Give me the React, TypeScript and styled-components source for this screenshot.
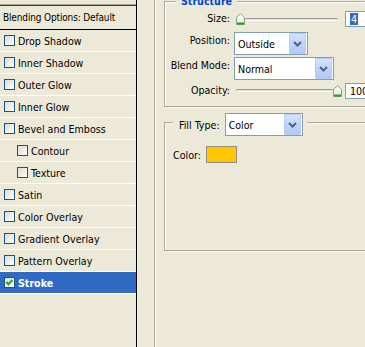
import React from "react";
import styled, { createGlobalStyle } from "styled-components";

const FONT = `"DejaVu Sans Condensed", "DejaVu Sans", sans-serif`;

const Global = createGlobalStyle`
  html, body { margin: 0; padding: 0; background: #ece9d8; overflow: hidden; }
  body { font-family: ${FONT}; font-stretch: condensed; font-size: 10.6px; color: #000; }
  * { box-sizing: border-box; }
`;

const Root = styled.div`
  display: flex;
  width: 365px;
  height: 347px;
  background: #ece9d8;
  overflow: hidden;
`;

const StylesList = styled.div`
  width: 137px;
  flex: none;
  border-right: 1px solid #000;
  display: flex;
  flex-direction: column;
`;

const TopStrip = styled.div`
  height: 5px;
  border-bottom: 1px solid #aca899;
`;

const HeaderItem = styled.div`
  height: 25px;
  border-top: 1px solid #3a3a3a;
  border-bottom: 1px solid #000;
  display: flex;
  align-items: center;
  padding-left: 3px;
  white-space: nowrap;
  font-size: 10px;
  letter-spacing: -0.15px;
`;

const Item = styled.div<{ $indent?: boolean; $selected?: boolean }>`
  height: 22px;
  border-bottom: 1px solid #fff;
  display: flex;
  align-items: center;
  gap: 3px;
  padding-left: ${(p) => (p.$indent ? 17 : 4)}px;
  white-space: nowrap;
  background: ${(p) => (p.$selected ? "#316ac5" : "transparent")};
  color: ${(p) => (p.$selected ? "#fff" : "#000")};
  font-weight: ${(p) => (p.$selected ? 700 : 400)};
`;

const Box = styled.span`
  width: 11px;
  height: 11px;
  flex: none;
  border: 1px solid #1c5180;
  background: linear-gradient(135deg, #dcdcd7 0%, #f0f0ea 60%, #ffffff 100%);
  display: flex;
  align-items: center;
  justify-content: center;
`;

const Gutter = styled.div`
  width: 18px;
  flex: none;
  border-right: 1px solid #aca899;
`;

const Pane = styled.div`
  flex: none;
  width: 260px;
  border-left: 1px solid #fff;
  padding: 1px 0 0 8px;
  display: flex;
  flex-direction: column;
`;

const GroupBox = styled.div<{ $h: number; $mt?: number }>`
  position: relative;
  width: 240px;
  height: ${(p) => p.$h}px;
  margin-top: ${(p) => p.$mt ?? 0}px;
  border: 1px solid #aca899;
  box-shadow: inset 1px 1px 0 #fff, 1px 1px 0 #fff;
  display: flex;
  flex-direction: column;
`;

const Legend = styled.div<{ $left: number; $top: number }>`
  position: absolute;
  left: ${(p) => p.$left}px;
  top: ${(p) => p.$top}px;
  background: #ece9d8;
  display: flex;
  align-items: center;
  gap: 5px;
  padding: 0 4px 0 6px;
  white-space: nowrap;
`;

const LegendTitle = styled.div`
  color: #0046d5;
  font-weight: 700;
  line-height: 12px;
  padding: 0 5px;
  position: absolute;
  left: 11px;
  top: -7px;
  background: #ece9d8;
`;

const Form = styled.div`
  display: flex;
  flex-direction: column;
  padding-top: 8px;
`;

const Row = styled.div<{ $h: number; $mt?: number }>`
  display: flex;
  align-items: flex-start;
  height: ${(p) => p.$h}px;
  margin-top: ${(p) => p.$mt ?? 0}px;
`;

const Label = styled.div`
  width: 65px;
  flex: none;
  text-align: right;
  line-height: 12px;
  padding-top: 2px;
  white-space: nowrap;
`;

const Slider = styled.div`
  position: relative;
  width: 102px;
  height: 100%;
  margin-left: 6px;
  display: flex;
  align-items: center;
  flex: none;
`;

const Track = styled.div`
  width: 100%;
  height: 3px;
  border-top: 1px solid #9d9c99;
  border-bottom: 1px solid #fff;
  border-left: 1px solid #b5b3a8;
  background: #e3e1d4;
  border-radius: 1px;
`;

const Thumb = styled.svg`
  position: absolute;
  top: 3px;
  width: 9px;
  height: 12px;
`;

const TextBox = styled.div`
  width: 34px;
  height: 16px;
  margin-left: 7px;
  align-self: center;
  flex: none;
  border: 1px solid #7f9db9;
  background: #fff;
  padding-left: 4px;
  line-height: 14px;
  white-space: nowrap;
`;

const Highlight = styled.span`
  display: inline-block;
  background: #316ac5;
  color: #fff;
  padding: 0 1px;
  line-height: 12px;
`;

const Select = styled.div<{ $w: number }>`
  width: ${(p) => p.$w}px;
  height: 23px;
  flex: none;
  border: 1px solid #7f9db9;
  background: #fff;
  display: flex;
  align-items: center;
  padding-left: 3px;
  white-space: nowrap;
`;

const SelectWrap = styled.div`
  margin-left: 4px;
`;

const DropButton = styled.div`
  margin-left: auto;
  margin-right: 1px;
  width: 17px;
  height: 21px;
  border: 1px solid #b9cbf3;
  border-radius: 1px;
  background: linear-gradient(180deg, #d6e2fd 0%, #c3d4fb 45%, #b3c7f5 100%);
  display: flex;
  align-items: center;
  justify-content: center;
`;

const ColorRow = styled.div`
  display: flex;
  align-items: center;
  gap: 5px;
  padding: 23px 0 0 8px;
`;

const Swatch = styled.div`
  width: 31px;
  height: 17px;
  border: 1px solid #8e8e86;
  background: #ffc600;
`;

const Chevron = () => (
  <svg width="9" height="6" viewBox="0 0 9 6">
    <path d="M1 1 L4.5 4.5 L8 1" fill="none" stroke="#4d6185" strokeWidth="2" />
  </svg>
);

const Check = () => (
  <svg width="9" height="9" viewBox="0 0 9 9">
    <path d="M1.5 4 L3.5 6.2 L7.5 1.8" fill="none" stroke="#21a121" strokeWidth="2" />
  </svg>
);

const SliderThumb = ({ left }: { left: number }) => (
  <Thumb viewBox="0 0 9 12" style={{ left }}>
    <defs>
      <linearGradient id="tg" x1="0" y1="0" x2="0" y2="1">
        <stop offset="0" stopColor="#ffffff" />
        <stop offset="1" stopColor="#e6e6dd" />
      </linearGradient>
    </defs>
    <path d="M0.5 4.5 L4.5 0.5 L8.5 4.5 V11.5 H0.5 Z" fill="url(#tg)" stroke="#8c9c88" />
    <rect x="1" y="9.5" width="7" height="2" fill="#21a121" />
  </Thumb>
);

const SliderControl = ({ value }: { value: number }) => (
  <Slider>
    <Track />
    <SliderThumb left={Math.round(value * 97)} />
  </Slider>
);

const items: { label: string; indent?: boolean; checked?: boolean }[] = [
  { label: "Drop Shadow" },
  { label: "Inner Shadow" },
  { label: "Outer Glow" },
  { label: "Inner Glow" },
  { label: "Bevel and Emboss" },
  { label: "Contour", indent: true },
  { label: "Texture", indent: true },
  { label: "Satin" },
  { label: "Color Overlay" },
  { label: "Gradient Overlay" },
  { label: "Pattern Overlay" },
  { label: "Stroke", checked: true },
];

export default function App() {
  return (
    <>
      <Global />
      <Root>
        <StylesList>
          <TopStrip />
          <HeaderItem>Blending Options: Default</HeaderItem>
          {items.map((it) => (
            <Item key={it.label} $indent={it.indent} $selected={it.checked}>
              <Box>{it.checked && <Check />}</Box>
              <span>{it.label}</span>
            </Item>
          ))}
        </StylesList>
        <Gutter />
        <Pane>
          <GroupBox $h={106}>
            <LegendTitle>Structure</LegendTitle>
            <Form>
              <Row $h={18}>
                <Label>Size:</Label>
                <SliderControl value={0} />
                <TextBox>
                  <Highlight>4</Highlight>
                </TextBox>
              </Row>
              <Row $h={23} $mt={4}>
                <Label>Position:</Label>
                <SelectWrap>
                  <Select $w={74}>
                    Outside
                    <DropButton>
                      <Chevron />
                    </DropButton>
                  </Select>
                </SelectWrap>
              </Row>
              <Row $h={23} $mt={2}>
                <Label>Blend Mode:</Label>
                <SelectWrap>
                  <Select $w={100}>
                    Normal
                    <DropButton>
                      <Chevron />
                    </DropButton>
                  </Select>
                </SelectWrap>
              </Row>
              <Row $h={17} $mt={2}>
                <Label>Opacity:</Label>
                <SliderControl value={1} />
                <TextBox>100</TextBox>
              </Row>
            </Form>
          </GroupBox>
          <GroupBox $h={129} $mt={15}>
            <Legend $left={8} $top={-10}>
              <span>Fill Type:</span>
              <Select $w={78}>
                Color
                <DropButton>
                  <Chevron />
                </DropButton>
              </Select>
            </Legend>
            <ColorRow>
              <span>Color:</span>
              <Swatch />
            </ColorRow>
          </GroupBox>
        </Pane>
      </Root>
    </>
  );
}
